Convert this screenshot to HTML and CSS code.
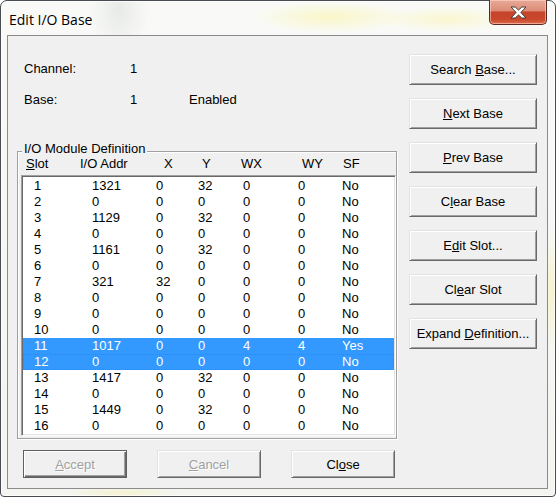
FILE: index.html
```html
<!DOCTYPE html>
<html>
<head>
<meta charset="utf-8">
<title>Edit I/O Base</title>
<link rel="stylesheet" href="styles.css">
</head>
<body>
<div class="window">
  <div class="titlebar">
    <div class="title">Edit I/O Base</div>
    <div class="close">
      <svg width="17" height="13" viewBox="0 0 17 13"><path d="M1 1H5.2L8.5 4.1L11.8 1H16L10.9 6.5L16 12H11.8L8.5 8.9L5.2 12H1L6.1 6.5Z" fill="#fff" stroke="#3f3f3f" stroke-width="1" stroke-linejoin="round"/></svg>
    </div>
  </div>
  <div class="client">
    <div class="left">
      <div class="info">
        <span>Channel:</span><span>1</span><span></span>
        <span>Base:</span><span>1</span><span>Enabled</span>
      </div>
      <div class="group">
        <div class="group-title">I/O Module Definition</div>
        <div class="head">
          <span><u>S</u>lot</span><span>I/O Addr</span><span>X</span><span>Y</span><span>WX</span><span>WY</span><span>SF</span>
        </div>
        <div class="list">
          <div class="row"><span>1</span><span>1321</span><span>0</span><span>32</span><span>0</span><span>0</span><span>No</span></div>
          <div class="row"><span>2</span><span>0</span><span>0</span><span>0</span><span>0</span><span>0</span><span>No</span></div>
          <div class="row"><span>3</span><span>1129</span><span>0</span><span>32</span><span>0</span><span>0</span><span>No</span></div>
          <div class="row"><span>4</span><span>0</span><span>0</span><span>0</span><span>0</span><span>0</span><span>No</span></div>
          <div class="row"><span>5</span><span>1161</span><span>0</span><span>32</span><span>0</span><span>0</span><span>No</span></div>
          <div class="row"><span>6</span><span>0</span><span>0</span><span>0</span><span>0</span><span>0</span><span>No</span></div>
          <div class="row"><span>7</span><span>321</span><span>32</span><span>0</span><span>0</span><span>0</span><span>No</span></div>
          <div class="row"><span>8</span><span>0</span><span>0</span><span>0</span><span>0</span><span>0</span><span>No</span></div>
          <div class="row"><span>9</span><span>0</span><span>0</span><span>0</span><span>0</span><span>0</span><span>No</span></div>
          <div class="row"><span>10</span><span>0</span><span>0</span><span>0</span><span>0</span><span>0</span><span>No</span></div>
          <div class="row sel"><span>11</span><span>1017</span><span>0</span><span>0</span><span>4</span><span>4</span><span>Yes</span></div>
          <div class="row sel focus"><span>12</span><span>0</span><span>0</span><span>0</span><span>0</span><span>0</span><span>No</span></div>
          <div class="row"><span>13</span><span>1417</span><span>0</span><span>32</span><span>0</span><span>0</span><span>No</span></div>
          <div class="row"><span>14</span><span>0</span><span>0</span><span>0</span><span>0</span><span>0</span><span>No</span></div>
          <div class="row"><span>15</span><span>1449</span><span>0</span><span>32</span><span>0</span><span>0</span><span>No</span></div>
          <div class="row"><span>16</span><span>0</span><span>0</span><span>0</span><span>0</span><span>0</span><span>No</span></div>
        </div>
      </div>
      <div class="bottom">
        <button class="btn wide default disabled"><span><u>A</u>ccept</span></button>
        <button class="btn wide disabled"><span><u>C</u>ancel</span></button>
        <button class="btn wide"><span>Cl<u>o</u>se</span></button>
      </div>
    </div>
    <div class="right">
      <button class="btn side"><span>Search <u>B</u>ase...</span></button>
      <button class="btn side"><span><u>N</u>ext Base</span></button>
      <button class="btn side"><span><u>P</u>rev Base</span></button>
      <button class="btn side"><span>C<u>l</u>ear Base</span></button>
      <button class="btn side"><span>E<u>d</u>it Slot...</span></button>
      <button class="btn side"><span>Cl<u>e</u>ar Slot</span></button>
      <button class="btn side"><span>Expand <u>D</u>efinition...</span></button>
    </div>
  </div>
</div>
</body>
</html>
```
FILE: styles.css
```css
* { box-sizing: border-box; }
html, body { margin: 0; padding: 0; }
body {
  width: 556px;
  height: 497px;
  overflow: hidden;
  background: #ffffff;
  font-family: "Liberation Sans", Arial, sans-serif;
  font-size: 13px;
  color: #000;
}
.window {
  width: 556px;
  height: 497px;
  border: 1px solid #474c52;
  border-radius: 7px 7px 4px 4px;
  padding: 0 7px 7px 6px;
  display: flex;
  flex-direction: column;
  background:
    radial-gradient(ellipse 80px 16px at 330px 16px, rgba(250, 244, 160, 0.55), rgba(250, 244, 160, 0)),
    radial-gradient(ellipse 70px 13px at 445px 18px, rgba(250, 244, 160, 0.45), rgba(250, 244, 160, 0)),
    radial-gradient(ellipse 30px 50px at 118px 8px, rgba(200, 204, 204, 0.35), rgba(200, 204, 204, 0)),
    radial-gradient(ellipse 12px 60px at 552px 290px, rgba(245, 240, 170, 0.6), rgba(245, 240, 170, 0)),
    radial-gradient(ellipse 60px 10px at 120px 494px, rgba(245, 240, 170, 0.5), rgba(245, 240, 170, 0)),
    linear-gradient(#f9faf8, #f4f5f1);
  box-shadow: inset 0 0 0 1px rgba(255, 255, 255, 0.75);
}
.titlebar {
  height: 34px;
  flex: none;
  display: flex;
  justify-content: space-between;
  align-items: flex-start;
}
.title {
  font-family: "Open Sans", "Noto Sans", sans-serif;
  font-size: 14px;
  line-height: 20px;
  padding: 9px 0 0 2px;
  color: #000;
  text-shadow: 0 0 6px #fff;
}
.close {
  width: 58px;
  height: 25px;
  margin: -1px 1px 0 0;
  border: 1px solid #5a2a22;
  border-top: none;
  border-radius: 0 0 5px 5px;
  display: flex;
  align-items: center;
  justify-content: center;
  background: linear-gradient(#e9aa98 0%, #dc8b76 45%, #c6452a 50%, #c9472c 80%, #de6a48 100%);
  box-shadow: inset 0 0 0 1px rgba(255, 220, 210, 0.55);
}
.close svg { display: block; }
.client {
  height: 454px;
  flex: none;
  border: 1px solid #8b8b8b;
  background: #f0f0f0;
  display: flex;
}
.left {
  width: 389px;
  flex: none;
}
.info {
  padding: 25px 0 0 16px;
  display: grid;
  grid-template-columns: 106px 59px auto;
  row-gap: 15px;
  line-height: 16px;
}
.group {
  margin: 43px 0 0 9px;
  width: 380px;
  border: 1px solid #a0a0a0;
  box-shadow: inset 1px 1px 0 #ffffff, 1px 1px 0 #ffffff;
  padding: 0 0 2px 3px;
}
.group-title {
  width: fit-content;
  margin: -10px 0 0 1px;
  padding: 0 2px;
  background: #f0f0f0;
  line-height: 13px;
}
.head {
  margin-top: 2px;
  padding-left: 5px;
  display: grid;
  grid-template-columns: 54px 84px 38px 39px 61px 41px auto;
  line-height: 13px;
}
.list {
  margin-top: 5px;
  width: 375px;
  height: 261px;
  background: #ffffff;
  border: 1px solid;
  border-color: #a0a0a0 #ffffff #ffffff #a0a0a0;
  box-shadow: inset 1px 1px 0 #696969, inset -1px -1px 0 #e3e3e3;
  padding: 2px 1px 1px 1px;
}
.row {
  height: 16px;
  line-height: 16px;
  padding-left: 11px;
  display: grid;
  grid-template-columns: 58px 64px 42px 45px 55px 44px auto;
  white-space: nowrap;
}
.row.sel {
  background: #3399ff;
  color: #ffffff;
}
.row.focus {
  outline: 1px dotted #cc6600;
  outline-offset: -1px;
}
.bottom {
  margin-top: 11px;
  padding-left: 15px;
  display: flex;
  gap: 30px;
}
.right {
  padding: 18px 0 0 12px;
  display: flex;
  flex-direction: column;
  gap: 13px;
}
.btn {
  display: flex;
  align-items: center;
  justify-content: center;
  margin: 0;
  padding: 0;
  font-family: "Liberation Sans", Arial, sans-serif;
  font-size: 13px;
  color: #000;
  background: #f0f0f0;
  border: 1px solid;
  border-color: #e3e3e3 #696969 #696969 #e3e3e3;
  box-shadow: inset 1px 1px 0 #ffffff, inset -1px -1px 0 #a0a0a0;
  white-space: nowrap;
}
.btn.side {
  width: 128px;
  height: 31px;
}
.btn.wide {
  width: 104px;
  height: 28px;
}
.btn.default {
  border-color: #5f5f5f;
  box-shadow: inset 1px 1px 0 #ffffff, inset -1px -1px 0 #696969, inset -2px -2px 0 #a0a0a0;
}
.btn.disabled {
  color: #a0a0a0;
  text-shadow: 1px 1px 0 #ffffff;
}
u { text-decoration: underline; text-underline-offset: 1px; }
```
